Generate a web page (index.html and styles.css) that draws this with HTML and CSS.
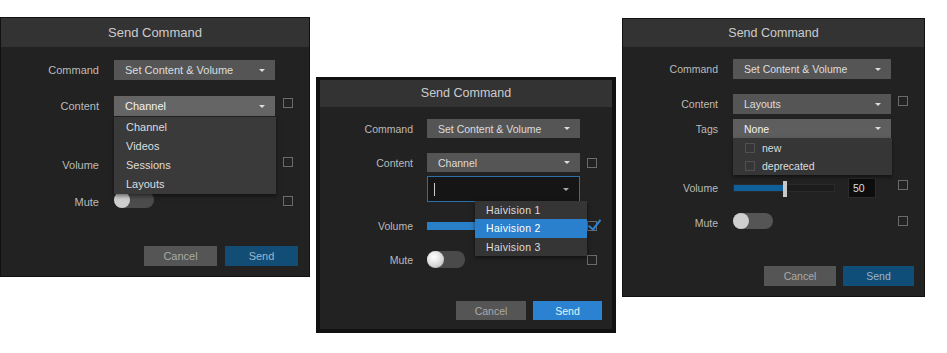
FILE: index.html
```html
<!DOCTYPE html>
<html lang="en">
<head>
  <meta charset="UTF-8">
  <title>Send Command</title>
  <link rel="stylesheet" href="styles.css">
</head>
<body>
  <!-- content list open -->
  <div class="dialog d1">
    <div class="dialog-head">Send Command</div>
    <div class="dialog-body">
      <div class="row r-cmd">
        <label class="lbl">Command</label>
        <div class="ctl"><div class="select">Set Content &amp; Volume<span class="caret"></span></div></div>
      </div>
      <div class="row r-content">
        <label class="lbl">Content</label>
        <div class="ctl">
          <div class="select active">Channel<span class="caret"></span></div>
          <ul class="menu">
            <li>Channel</li>
            <li>Videos</li>
            <li>Sessions</li>
            <li>Layouts</li>
          </ul>
        </div>
        <span class="box"></span>
      </div>
      <div class="row r-sub">
        <span class="lbl"></span>
        <div class="ctl"><div class="select"></div></div>
      </div>
      <div class="row r-vol">
        <label class="lbl">Volume</label>
        <div class="ctl"><div class="slider"><span class="fill" style="width: 50%"></span></div></div>
        <span class="box"></span>
      </div>
      <div class="row r-mute">
        <label class="lbl">Mute</label>
        <div class="ctl"><span class="toggle"><span class="knob"></span></span></div>
        <span class="box"></span>
      </div>
    </div>
    <div class="dialog-foot">
      <button class="btn">Cancel</button>
      <button class="btn primary">Send</button>
    </div>
  </div>

  <!-- channel picker open -->
  <div class="dialog d2">
    <div class="dialog-head">Send Command</div>
    <div class="dialog-body">
      <div class="row r-cmd">
        <label class="lbl">Command</label>
        <div class="ctl"><div class="select">Set Content &amp; Volume<span class="caret"></span></div></div>
      </div>
      <div class="row r-content">
        <label class="lbl">Content</label>
        <div class="ctl"><div class="select">Channel<span class="caret"></span></div></div>
        <span class="box"></span>
      </div>
      <div class="row r-sub">
        <span class="lbl"></span>
        <div class="ctl">
          <div class="select search"><span class="cursor"></span><span class="caret"></span></div>
          <ul class="menu">
            <li>Haivision 1</li>
            <li class="hover">Haivision 2</li>
            <li>Haivision 3</li>
          </ul>
        </div>
      </div>
      <div class="row r-vol">
        <label class="lbl">Volume</label>
        <div class="ctl"><div class="slider"><span class="fill" style="width: 70%"></span></div></div>
        <span class="box checked"></span>
      </div>
      <div class="row r-mute">
        <label class="lbl">Mute</label>
        <div class="ctl"><span class="toggle"><span class="knob"></span></span></div>
        <span class="box"></span>
      </div>
    </div>
    <div class="dialog-foot">
      <button class="btn">Cancel</button>
      <button class="btn primary">Send</button>
    </div>
  </div>

  <!-- tags picker open -->
  <div class="dialog d3">
    <div class="dialog-head">Send Command</div>
    <div class="dialog-body">
      <div class="row r-cmd">
        <label class="lbl">Command</label>
        <div class="ctl"><div class="select">Set Content &amp; Volume<span class="caret"></span></div></div>
      </div>
      <div class="row r-content">
        <label class="lbl">Content</label>
        <div class="ctl"><div class="select">Layouts<span class="caret"></span></div></div>
        <span class="box"></span>
      </div>
      <div class="row r-tags">
        <label class="lbl">Tags</label>
        <div class="ctl">
          <div class="select active">None<span class="caret"></span></div>
          <ul class="menu">
            <li><span class="box"></span>new</li>
            <li><span class="box"></span>deprecated</li>
          </ul>
        </div>
      </div>
      <div class="row r-sub">
        <span class="lbl"></span>
        <div class="ctl"><div class="select"></div></div>
      </div>
      <div class="row r-vol">
        <label class="lbl">Volume</label>
        <div class="ctl vol-ctl">
          <div class="slider"><span class="fill" style="width: 49%"></span><span class="thumb"></span></div>
          <span class="num">50</span>
        </div>
        <span class="box"></span>
      </div>
      <div class="row r-mute">
        <label class="lbl">Mute</label>
        <div class="ctl"><span class="toggle"><span class="knob"></span></span></div>
        <span class="box"></span>
      </div>
    </div>
    <div class="dialog-foot">
      <button class="btn">Cancel</button>
      <button class="btn primary">Send</button>
    </div>
  </div>
</body>
</html>
```

FILE: styles.css
```css
body {
  margin: 0;
  height: 353px;
  background: #fff;
  font-family: 'Liberation Sans', Arial, sans-serif;
  display: flex;
  align-items: flex-start;
  gap: 6px;
  overflow: hidden;
}
.dialog {
  background: #222;
  border: 1px solid #111;
  display: flex;
  flex-direction: column;
  color: #bbb;
  font-size: 11px;
}
.dialog-head {
  background: #333;
  color: #ccc;
  text-align: center;
  font-size: 13px;
}
.dialog-body {
  display: flex;
  flex-direction: column;
}
.row {
  display: flex;
  align-items: center;
  height: 20px;
}
.lbl {
  text-align: right;
  flex: none;
}
.ctl {
  position: relative;
  height: 100%;
  flex: none;
}
.select {
  height: 100%;
  background: #555;
  color: #ddd;
  display: flex;
  align-items: center;
  justify-content: space-between;
  padding: 0 10px 0 11px;
  box-sizing: border-box;
}
.select.active {
  background: #656565;
  color: #f2f2f2;
}
.caret {
  border-left: 3px solid transparent;
  border-right: 3px solid transparent;
  border-top: 3px solid #ddd;
  margin-left: auto;
}
.box {
  width: 10px;
  height: 10px;
  border: 1px solid #6a6a6a;
  box-sizing: border-box;
  flex: none;
  position: relative;
}
.menu {
  position: absolute;
  margin: 0;
  padding: 0;
  list-style: none;
  background: #3a3a3a;
  color: #ddd;
  box-shadow: 0 2px 4px rgba(0,0,0,0.5);
  z-index: 2;
}
.menu li {
  display: flex;
  align-items: center;
}
.slider {
  position: relative;
  height: 8px;
  background: #1b1b1b;
  border: 1px solid #2a2a2a;
  box-sizing: border-box;
}
.fill {
  display: block;
  height: 100%;
  background: #2a80c8;
}
.toggle {
  display: block;
  width: 40px;
  height: 16px;
  border-radius: 8px;
  background: #4c4c4c;
}
.knob {
  display: block;
  width: 16px;
  height: 16px;
  border-radius: 50%;
  background: #cfcfcf;
}
.dialog-foot {
  margin-top: auto;
  display: flex;
  justify-content: flex-end;
}
.btn {
  border: none;
  padding: 0;
  background: #555;
  color: #aaa;
  font-family: inherit;
  font-size: 11px;
}
.btn.primary {
  background: #124d76;
  color: #9fb6c8;
}

/* panel 1 */
.d1 { width: 310px; height: 260px; margin-top: 17px; box-sizing: border-box; }
.d1 .dialog-head { height: 29px; line-height: 29px; }
.d1 .lbl { width: 98px; margin-right: 15px; }
.d1 .ctl { width: 161px; }
.d1 .row > .box { margin-left: 8px; margin-bottom: 6px; }
.d1 .r-cmd { margin-top: 13px; }
.d1 .r-content { margin-top: 16px; }
.d1 .r-sub { margin-top: 8px; }
.d1 .r-vol { margin-top: 11px; }
.d1 .r-mute { margin-top: 17px; }
.d1 .r-mute > .box { margin-bottom: 2px; }
.d1 .slider { margin-top: 6px; }
.d1 .menu { top: 21px; left: 0; width: 162px; }
.d1 .menu li { height: 19.25px; padding-left: 12px; }
.d1 .dialog-foot { gap: 8px; padding: 0 11px 10px 0; }
.d1 .btn { width: 73px; height: 20px; }

/* panel 2 */
.d2 { width: 300px; height: 256px; margin-top: 77px; border: 4px solid #111; border-top-width: 3px; box-sizing: border-box; font-size: 10.5px; }
.d2 .dialog-head { height: 27px; line-height: 27px; font-size: 12.5px; }
.d2 .lbl { width: 93px; margin-right: 14px; }
.d2 .ctl { width: 153px; }
.d2 .row > .box { margin-left: 7px; }
.d2 .r-cmd { margin-top: 12px; height: 19px; }
.d2 .r-content { margin-top: 15px; height: 19px; }
.d2 .r-sub { margin-top: 4px; height: 26px; }
.d2 .r-vol { margin-top: 14px; }
.d2 .r-mute { margin-top: 14px; }
.d2 .slider { margin-top: 6px; border: none; }
.d2 .toggle { width: 38px; height: 17px; margin-top: 1px; background: #4a4a4a; }
.d2 .knob { width: 17px; height: 17px; background: radial-gradient(circle at 40% 35%, #fff 0%, #ddd 50%, #aaa 100%); }
.d2 .search { background: #151515; border: 1px solid #2c6ea6; padding-left: 6px; }
.d2 .cursor { width: 1px; height: 13px; background: #ccc; }
.d2 .search .caret { border-top-color: #aaa; }
.d2 .menu { top: 25px; left: 48px; width: 112px; background: #353535; }
.d2 .menu li { height: 18.3px; padding-left: 11px; letter-spacing: 0.3px; }
.d2 .menu li.hover { background: #2a80cc; color: #fff; }
.d2 .box.checked::after {
  content: '';
  position: absolute;
  left: 3px;
  top: -5px;
  width: 5px;
  height: 11px;
  border-right: 2px solid #2a86d6;
  border-bottom: 2px solid #2a86d6;
  transform: rotate(38deg);
}
.d2 .dialog-foot { gap: 7px; padding: 0 10px 9px 0; }
.d2 .btn { width: 70px; height: 19px; font-size: 10.5px; }
.d2 .btn.primary { width: 69px; background: #2a82d0; color: #e8f2fb; }

/* panel 3 */
.d3 { width: 303px; height: 279px; margin-top: 18px; box-sizing: border-box; font-size: 10.5px; }
.d3 .dialog-head { height: 28px; line-height: 28px; font-size: 12.5px; }
.d3 .lbl { width: 95px; margin-right: 15px; }
.d3 .ctl { width: 158px; }
.d3 .row > .box { margin-left: 7px; margin-bottom: 6px; }
.d3 .r-cmd { margin-top: 12px; }
.d3 .r-content { margin-top: 15px; }
.d3 .r-tags { margin-top: 5px; height: 19px; }
.d3 .r-sub { margin-top: 5px; height: 19px; }
.d3 .r-vol { margin-top: 16px; }
.d3 .r-mute { margin-top: 15px; }
.d3 .r-mute > .box { margin-bottom: 4px; }
.d3 .select.active { background: #5e5e5e; }
.d3 .menu { top: 19px; left: 0; width: 159px; padding-top: 1px; background: #363636; }
.d3 .menu li { height: 18px; padding-left: 12px; gap: 7px; }
.d3 .menu .box { border-color: #505050; }
.d3 .vol-ctl { display: flex; align-items: center; }
.d3 .slider { width: 102px; background: #1c1c1c; }
.d3 .fill { background: #0f5f9a; }
.d3 .thumb {
  position: absolute;
  left: 49px;
  top: -4px;
  width: 4px;
  height: 16px;
  background: #c8c8c8;
}
.d3 .num {
  margin-left: 13px;
  width: 28px;
  height: 20px;
  background: #0d0d0d;
  border: 1px solid #2c2c2c;
  box-sizing: border-box;
  color: #ddd;
  padding-left: 4px;
  line-height: 18px;
}
.d3 .toggle { background: #555; }
.d3 .dialog-foot { gap: 7px; padding: 0 10px 10px 0; }
.d3 .btn { width: 72px; height: 20px; font-size: 10.5px; }
.d3 .btn.primary { width: 71px; background: #0f4e79; color: #9ab4c8; }
```
